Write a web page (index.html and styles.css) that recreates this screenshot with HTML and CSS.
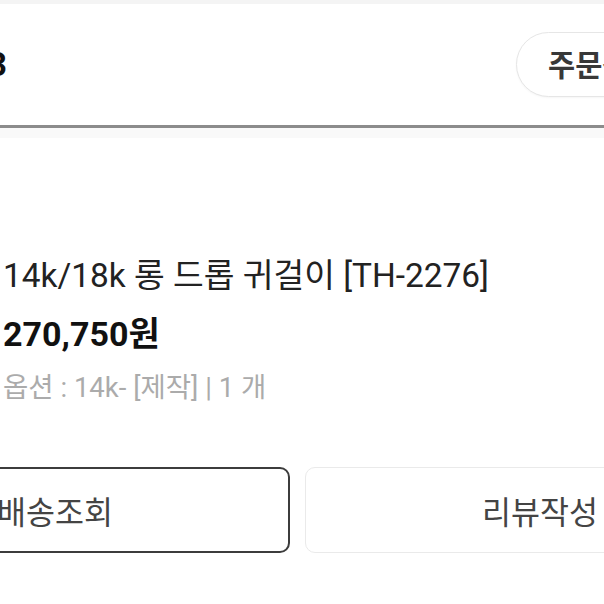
FILE: index.html
```html
<!DOCTYPE html>
<html lang="ko">
<head>
<meta charset="utf-8">
<title>주문내역</title>
<link rel="stylesheet" href="styles.css">
</head>
<body>
<div class="screen">
  <div class="topbar"></div>
  <header class="head">
    <span class="date">3</span>
    <button class="pill">주문상세</button>
  </header>
  <div class="divider"></div>
  <div class="shade"></div>
  <section class="item">
    <p class="title">14k/18k 롱 드롭 귀걸이 [TH-2276]</p>
    <p class="price">270,750원</p>
    <p class="opt">옵션 : 14k- [제작] | 1 개</p>
  </section>
  <div class="actions">
    <button class="btn btn-dark">배송조회</button>
    <button class="btn btn-light">리뷰작성</button>
  </div>
</div>
</body>
</html>
```
FILE: styles.css
```css
html, body {
  margin: 0;
  padding: 0;
  background: #ffffff;
}
body {
  width: 604px;
  height: 604px;
  overflow: hidden;
  font-family: Roboto, "Noto Sans CJK KR", sans-serif;
}
.screen {
  width: 604px;
  overflow: hidden;
}
.topbar {
  height: 4px;
  background: #f4f4f4;
}
.head {
  height: 121px;
  display: flex;
  align-items: center;
  justify-content: space-between;
}
.date {
  font-size: 33px;
  font-weight: 700;
  color: #111;
  margin-left: -12px;
  line-height: 1;
}
.pill {
  height: 65px;
  width: 180px;
  margin-right: -92px;
  border: 1.5px solid #e6e6e6;
  border-radius: 33px;
  background: #fff;
  padding: 0 0 4px 31px;
  text-align: left;
  font-family: inherit;
  font-size: 29.5px;
  font-weight: 700;
  color: #383838;
  box-shadow: 0 1px 2px rgba(0,0,0,0.04);
}
.divider {
  height: 3px;
  background: #8c8c8c;
  box-shadow: 0 1px 1px rgba(0,0,0,0.12);
}
.shade {
  height: 10px;
  background: #f9f9f9;
}
.item {
  padding: 118px 0 0 3px;
}
.item p {
  margin: 0;
  line-height: 40px;
  white-space: nowrap;
}
.title {
  font-size: 33.4px;
  color: #222;
}
.price {
  margin-top: 18px !important;
  font-size: 34px;
  font-weight: 700;
  color: #111;
}
.opt {
  margin-top: 14px !important;
  font-size: 27.5px;
  color: #ababab;
}
.actions {
  display: flex;
  gap: 15px;
  margin-top: 59px;
  margin-left: -180px;
}
.btn {
  flex: 0 0 470px;
  height: 86px;
  border-radius: 10px;
  background: #fff;
  font-family: inherit;
  font-size: 31.5px;
  color: #444;
  padding: 0;
}
.btn-dark {
  border: 2px solid #3c3c3c;
}
.btn-light {
  border: 1.5px solid #eaeaea;
}
```
